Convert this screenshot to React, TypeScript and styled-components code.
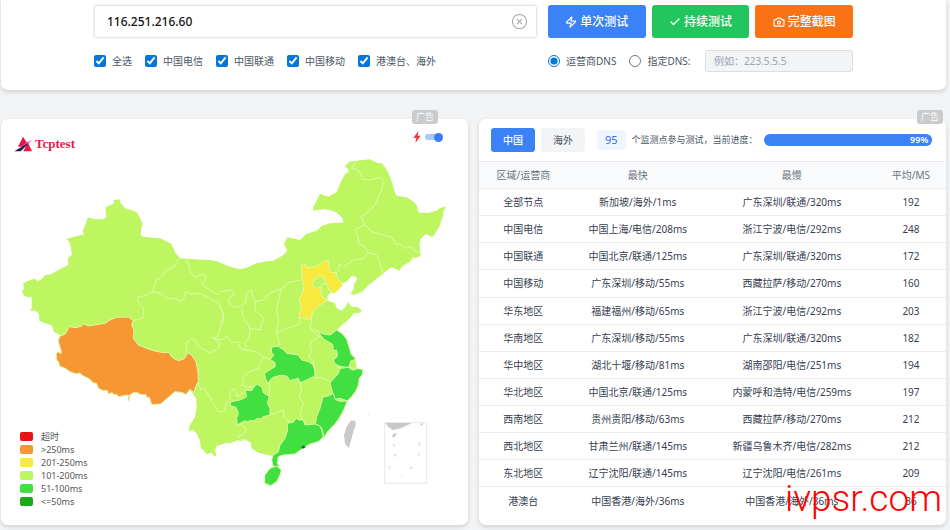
import React, { useState } from 'react';
import styled, { createGlobalStyle } from 'styled-components';
import { Camera, Check, CircleX, Zap } from 'lucide-react';

const GlobalStyle = createGlobalStyle`
  *, *::before, *::after { box-sizing: border-box; }
  body {
    margin: 0;
    background: #f2f3f5;
    color: #374151;
    font-family: "Noto Sans", "Noto Sans CJK SC", sans-serif;
    font-size: 10px;
    line-height: 14px;
  }
  button, input { font: inherit; color: inherit; margin: 0; }
`;

const Page = styled.main`
  padding: 0 4px 5px 1px;
`;

const Card = styled.section`
  position: relative;
  background: #fff;
  border-radius: 7px;
  box-shadow: 0 2px 4px rgba(0, 0, 0, 0.14);
`;

const QueryCard = styled(Card)`
  border-radius: 0 0 7px 7px;
  padding: 5px 12px 18px;
`;

const QueryForm = styled.form`
  display: grid;
  grid-template-columns: minmax(0, 1fr) 305px;
  gap: 12px 11px;
  max-width: 759px;
  margin: 0 auto;
`;

const HostField = styled.div`
  display: flex;
  align-items: center;
  height: 33px;
  padding: 0 8px 0 12px;
  border: 1px solid #e3e5e8;
  border-radius: 3px;
  box-shadow: 0 0 0 1px #f4f4f5;
`;

const HostInput = styled.input`
  flex: 1;
  min-width: 0;
  padding: 0;
  border: 0;
  outline: 0;
  background: none;
  color: #111;
  font-size: 12px;
  font-weight: 500;
`;

const ClearButton = styled.button`
  display: flex;
  padding: 0;
  border: 0;
  background: none;
  color: #a3a6ab;
`;

const ActionGroup = styled.div`
  display: grid;
  grid-template-columns: repeat(3, 1fr);
  gap: 6px;
`;

const ActionButton = styled.button<{ $tone: string }>`
  display: flex;
  align-items: center;
  justify-content: center;
  gap: 3px;
  height: 33px;
  padding: 0;
  border: 0;
  border-radius: 3px;
  background: ${(p) => p.$tone};
  color: #fff;
  font-size: 12px;
  font-weight: 500;
`;

const OptionRow = styled.div`
  display: flex;
  align-items: center;
  gap: 13px;
  height: 22px;
  white-space: nowrap;
`;

const Option = styled.label`
  display: flex;
  align-items: center;
  gap: 6px;
  color: #4b5563;
`;

const OptionInput = styled.input`
  width: 12px;
  height: 12px;
  accent-color: #0875d8;
`;

const DnsInput = styled.input`
  width: 148px;
  height: 22px;
  margin-left: auto;
  padding: 0 8px;
  border: 1px solid #dcdee2;
  border-radius: 3px;
  background: #f3f4f6;
  &::placeholder { color: #9ca3af; opacity: 1; }
`;

const Panels = styled.div`
  display: grid;
  grid-template-columns: repeat(2, minmax(0, 1fr));
  gap: 11px;
  margin-top: 29px;
`;

const AdBadge = styled.span<{ $right: number }>`
  position: absolute;
  top: -9px;
  right: ${(p) => p.$right}px;
  padding: 0 4px;
  border-radius: 3px;
  background: #cacbcd;
  color: #fff;
  font-size: 9px;
`;

const Brand = styled.a`
  position: absolute;
  top: 16px;
  left: 13px;
  display: flex;
  align-items: center;
  gap: 3px;
  color: #e5184f;
  font-family: "Liberation Serif", serif;
  font-size: 13px;
  font-weight: 700;
  line-height: 18px;
  text-decoration: none;
`;

const LiveSwitch = styled.label`
  position: absolute;
  top: 12px;
  right: 25px;
  display: flex;
  align-items: center;
  gap: 4px;
`;

const SwitchInput = styled.input`
  appearance: none;
  display: flex;
  align-items: center;
  justify-content: flex-start;
  width: 18px;
  height: 6px;
  border-radius: 3px;
  background: #d1d5db;
  &::before {
    content: "";
    width: 9px;
    height: 9px;
    flex: none;
    border-radius: 50%;
    background: #3b7cf6;
  }
  &:checked {
    justify-content: flex-end;
    background: #a9c8fc;
  }
`;

const MapSvg = styled.svg`
  display: block;
  width: 100%;
  height: auto;
`;

const Legend = styled.ul`
  position: absolute;
  left: 19px;
  bottom: 17px;
  margin: 0;
  padding: 0;
  list-style: none;
  color: #555;
  font-size: 9px;
`;

const LegendItem = styled.li<{ $color: string }>`
  display: flex;
  align-items: center;
  gap: 8px;
  height: 13px;
  line-height: 13px;
  &::before {
    content: "";
    width: 13px;
    height: 9px;
    border-radius: 2px;
    background: ${(p) => p.$color};
  }
`;

const Toolbar = styled.div`
  display: flex;
  align-items: center;
  gap: 6px;
  height: 42px;
  padding: 0 12px;
  white-space: nowrap;
`;

const TabButton = styled.button<{ $active: boolean }>`
  width: 44px;
  height: 24px;
  padding: 0;
  border: 0;
  border-radius: 3px;
  background: ${(p) => (p.$active ? '#3b82f6' : '#f3f4f6')};
  color: ${(p) => (p.$active ? '#fff' : '#4b5563')};
  font-weight: ${(p) => (p.$active ? 500 : 400)};
`;

const NodeCount = styled.strong`
  margin-left: 6px;
  padding: 3px 8px;
  border-radius: 3px;
  background: #eff6ff;
  color: #3566e8;
  font-size: 11px;
  font-weight: 400;
`;

const ProgressText = styled.span`
  color: #4b5563;
  font-size: 9px;
`;

const ProgressTrack = styled.div`
  flex: 1;
  height: 12px;
  border-radius: 6px;
  background: #f3f4f6;
`;

const ProgressFill = styled.div`
  height: 12px;
  padding-right: 4px;
  border-radius: 6px;
  background: #3b82f6;
  color: #fff;
  font-size: 9px;
  font-weight: 600;
  line-height: 12px;
  text-align: right;
`;

const ResultTable = styled.table`
  width: 100%;
  height: 353px;
  table-layout: fixed;
  border-collapse: collapse;
  text-align: center;
  white-space: nowrap;
`;

const HeadCell = styled.th<{ $width: string }>`
  width: ${(p) => p.$width};
  height: 27px;
  padding: 0;
  border-top: 1px solid #eaecef;
  background: #f9fafb;
  color: #6b7280;
  font-weight: 400;
`;

const ResultRow = styled.tr`
  border-top: 1px solid #eaecef;
`;

const Cell = styled.td`
  height: 27px;
  padding: 0;
`;

const Watermark = styled.div`
  position: absolute;
  right: 4px;
  bottom: 5px;
  color: #f00;
  font-family: Roboto, sans-serif;
  font-size: 37px;
  font-weight: 300;
  line-height: 42px;
  pointer-events: none;
`;

const carriers = ['全选', '中国电信', '中国联通', '中国移动', '港澳台、海外'];

const legend = [
  ['超时', '#e81313'],
  ['>250ms', '#f79733'],
  ['201-250ms', '#f8e93f'],
  ['101-200ms', '#bdf661'],
  ['51-100ms', '#41df3f'],
  ['<=50ms', '#1ba81b'],
];

const columns = [
  ['区域/运营商', '19%'],
  ['最快', '30%'],
  ['最慢', '36%'],
  ['平均/MS', '15%'],
];

const results = [
  ['全部节点', '新加坡/海外/1ms', '广东深圳/联通/320ms', '192'],
  ['中国电信', '中国上海/电信/208ms', '浙江宁波/电信/292ms', '248'],
  ['中国联通', '中国北京/联通/125ms', '广东深圳/联通/320ms', '172'],
  ['中国移动', '广东深圳/移动/55ms', '西藏拉萨/移动/270ms', '160'],
  ['华东地区', '福建福州/移动/65ms', '浙江宁波/电信/292ms', '203'],
  ['华南地区', '广东深圳/移动/55ms', '广东深圳/联通/320ms', '182'],
  ['华中地区', '湖北十堰/移动/81ms', '湖南邵阳/电信/251ms', '194'],
  ['华北地区', '中国北京/联通/125ms', '内蒙呼和浩特/电信/259ms', '197'],
  ['西南地区', '贵州贵阳/移动/63ms', '西藏拉萨/移动/270ms', '212'],
  ['西北地区', '甘肃兰州/联通/145ms', '新疆乌鲁木齐/电信/282ms', '212'],
  ['东北地区', '辽宁沈阳/联通/145ms', '辽宁沈阳/电信/261ms', '209'],
  ['港澳台', '中国香港/海外/36ms', '中国香港/海外/36ms', '36'],
];

const mainland =
  '66,872 72,868 70,850 85,842 105,836 112,844 122,840 135,826 155,822 175,810 205,795 204,775 216,763 210,730 200,716 245,704 252,706 248,695 264,652 285,658 308,658 319,652 316,622 340,612 342,600 360,598 361,608 375,625 400,632 412,638 424,662 428,672 424,685 425,690 421,705 430,710 460,713 480,715 515,732 525,757 540,775 580,778 630,780 650,784 670,792 690,800 720,808 740,803 770,790 800,784 820,782 850,765 862,752 852,732 862,712 900,720 918,702 950,692 965,678 990,670 1030,668 1028,655 1010,638 990,630 975,628 950,630 938,632 940,622 960,582 985,590 1010,576 1015,565 1018,555 1035,522 1046,515 1042,505 1034,498 1048,485 1070,482 1110,478 1130,488 1145,490 1158,505 1170,530 1180,560 1186,582 1192,588 1220,592 1240,605 1250,615 1253,630 1258,638 1285,638 1310,632 1320,624 1338,619 1330,636 1328,650 1318,680 1298,712 1278,702 1262,716 1258,735 1262,768 1245,775 1240,770 1230,785 1205,800 1198,812 1175,802 1160,812 1148,822 1125,840 1100,860 1090,872 1078,878 1060,886 1052,880 1062,866 1062,852 1072,838 1068,830 1055,828 1040,845 1022,852 1028,856 1012,874 1002,880 990,878 982,890 984,902 1005,910 1010,925 1025,932 1035,922 1046,905 1050,917 1060,921 1070,920 1085,930 1080,938 1062,939 1055,948 1045,960 1025,975 1010,992 1028,1002 1040,1018 1050,1050 1053,1062 1068,1078 1070,1106 1088,1108 1088,1122 1078,1135 1075,1155 1068,1172 1055,1190 1042,1203 1032,1228 1020,1250 1005,1272 985,1292 972,1312 955,1325 930,1332 908,1345 885,1362 850,1365 835,1370 832,1390 838,1400 820,1400 815,1380 818,1368 790,1362 775,1358 755,1345 752,1328 738,1320 730,1318 720,1325 715,1320 690,1330 680,1328 660,1335 650,1337 645,1350 650,1370 640,1366 635,1358 620,1363 610,1350 602,1345 600,1322 590,1300 578,1290 565,1294 570,1275 585,1250 590,1220 588,1195 578,1180 520,1120 180,1005 162,995 155,976 135,970 118,962 116,940 105,932 88,932 95,925 95,892 80,890 72,888';

const tibet =
  '175,1020 180,1008 195,1003 208,980 230,983 244,978 252,971 265,978 300,972 315,970 330,960 350,952 385,951 400,962 395,975 402,990 400,1015 415,1035 440,1045 460,1052 490,1058 505,1057 520,1075 535,1082 550,1078 556,1072 562,1058 575,1065 588,1085 594,1115 595,1145 585,1165 583,1178 570,1168 558,1184 548,1178 525,1175 510,1188 490,1205 482,1212 455,1214 448,1192 440,1193 438,1184 420,1184 415,1179 400,1178 390,1185 388,1202 384,1200 385,1185 355,1190 350,1183 340,1184 337,1178 325,1182 322,1172 310,1172 295,1165 289,1150 278,1148 270,1138 245,1125 240,1119 228,1122 210,1115 195,1105 178,1098 176,1086 170,1080 168,1062 175,1055 182,1062 184,1055 178,1035';

const hebei =
  '905,795 915,793 922,803 945,800 965,790 972,784 985,781 988,795 988,808 995,818 1010,816 1008,830 1022,845 1028,856 1015,870 1002,880 988,872 982,855 976,848 972,835 960,827 950,835 943,836 936,855 950,865 962,862 966,890 985,900 970,908 950,923 940,935 935,945 935,957 915,957 898,952 898,940 905,920 897,900 908,880 912,860 908,845 905,820';

const lowLatency = [
  '815,1042 835,1038 842,1045 850,1048 860,1060 895,1065 905,1080 925,1085 940,1095 945,1115 945,1128 920,1140 900,1148 895,1135 870,1142 860,1128 840,1126 820,1132 812,1138 805,1150 797,1138 793,1120 825,1100 825,1088 810,1078 822,1065 815,1058',
  '693,1205 720,1200 740,1190 735,1170 755,1172 762,1160 772,1153 785,1160 790,1178 808,1190 802,1210 810,1225 810,1245 790,1250 782,1257 770,1255 764,1262 750,1262 740,1266 735,1262 712,1275 710,1255 715,1240 708,1222 693,1218',
  '955,995 970,1002 990,1005 1010,990 1028,1002 1040,1018 1050,1050 1053,1062 1068,1078 1055,1085 1045,1102 1022,1100 1005,1092 1000,1080 1012,1070 1010,1050 1000,1052 998,1033 972,1018 960,1003',
  '1020,1105 1045,1102 1058,1110 1070,1106 1088,1108 1088,1122 1078,1135 1075,1155 1068,1172 1055,1190 1042,1203 1020,1195 1005,1198 998,1180 990,1148 1005,1132 1015,1120',
  '970,1190 985,1188 1000,1180 1005,1198 1020,1204 1042,1203 1032,1228 1020,1250 1005,1272 985,1292 972,1312 965,1285 946,1272 950,1250 960,1225',
  '888,1255 900,1260 910,1260 915,1275 945,1272 960,1278 965,1290 970,1310 955,1325 930,1332 908,1345 885,1362 850,1365 835,1370 832,1390 838,1400 820,1400 815,1380 820,1365 835,1355 840,1335 855,1315 863,1290 862,1270 880,1266',
  '795,1425 810,1405 830,1398 844,1410 840,1425 830,1445 812,1457 795,1450',
];

const borders = [
  '540,775 530,785 525,800 500,810 485,830 468,842 458,875 440,885 412,892 418,915 432,925 428,955 400,962',
  '458,875 480,880 495,893 525,897 545,903 555,888 555,875 575,882 600,880 630,895 655,910 668,935 672,960 660,985 655,1005 650,1012 635,1012',
  '560,778 568,800 570,815 585,832 600,825 615,823 618,835 605,852 625,868 640,875 650,885 660,875 695,870 702,878 700,885 685,895 688,910 700,920 715,922 735,910 740,880 755,870 757,885 765,905 790,900 808,880 845,865 865,848 900,840',
  '725,925 730,955 745,975 750,985 780,990 785,970 793,955 775,940 765,930 765,905',
  '660,925 670,940 662,975',
  '845,865 838,890 830,930 835,960 830,1000 838,1030 832,1040',
  '750,985 748,1010 735,1030 738,1050 770,1055 790,1070 810,1078',
  '562,1058 558,1030 575,1015 585,1020 595,1040 630,1058 655,1045 660,1030 640,1015 665,1020 680,1008 695,1028 712,1025 725,1048 738,1050',
  '790,1070 775,1105 750,1115 730,1130 728,1155 745,1162 762,1160',
  '830,1000 860,985 880,978 900,972 898,952',
  '935,957 930,985 945,1000 957,1010 935,1025 930,1040 935,1055 925,1070 940,1080 945,1115',
  '935,985 955,995',
  '960,1012 955,1005',
  '945,1135 965,1132 990,1145',
  '1020,1105 1005,1092',
  '900,1148 905,1170 898,1190 910,1210 900,1240 905,1257',
  '808,1145 808,1190',
  '810,1245 850,1230 853,1255 870,1265',
  '710,1275 725,1275 738,1285 733,1302 715,1310 725,1320 740,1320',
  '595,1150 602,1170 610,1162 625,1185 640,1210 655,1235 670,1235 675,1228 680,1208 690,1198 690,1180 700,1166 708,1174 712,1190 730,1178 740,1180',
  '1065,488 1055,505 1075,510 1090,538 1110,540 1140,532 1152,545 1145,570 1125,615 1100,640 1082,650 1095,675 1065,688 1075,710 1075,730 1095,740 1105,758 1090,775 1060,780 1030,802 1018,790 1015,815',
  '1095,675 1115,695 1150,705 1175,712 1190,735 1200,732 1215,745 1235,740 1242,752 1262,758',
  '1105,758 1130,765 1140,790 1150,825',
  '962,862 968,850 978,852',
];

const insetMarks = [
  '1177,1305 1185,1300 1190,1298 1185,1310 1178,1313',
  '1260,1272 1268,1270 1267,1278',
  '1256,1332 1259,1325 1260,1336',
  '1253,1368 1258,1357 1257,1366',
  '1228,1408 1238,1398 1236,1405',
  '1180,1369 1188,1361 1187,1368',
  '1166,1396 1170,1405 1168,1407',
  '1203,1426 1207,1425 1205,1428',
  '1178,1328 1185,1338 1182,1339',
  '1105,1243 1108,1242 1108,1246',
];

function BrandMark() {
  return (
    <svg width="18" height="16" viewBox="0 0 54 48" aria-hidden="true">
      <path d="M27 2 41 23 25 32H12Z" fill="#ed1745" />
      <path d="M36 29 42 20 54 46H28Z" fill="#ed1745" />
      <path d="M54 13 C38 18 28 25 19 35 C35 25 43 25 54 13Z" fill="#d94b91" />
      <path d="M1 46 C15 38 26 30 38 24 L44 21 C35 31 27 39 20 46Z" fill="#28194d" />
    </svg>
  );
}

function ChinaMap() {
  return (
    <MapSvg viewBox="3 357 1401 1218" role="img" aria-label="中国延迟分布图">
      <g stroke="#dffaa9" strokeWidth="3" strokeLinejoin="round" strokeLinecap="round">
        <polygon points={mainland} fill="#bdf661" stroke="none" />
        {borders.map((line) => (
          <polyline key={line} points={line} fill="none" />
        ))}
        <polygon points={tibet} fill="#f79733" />
        <polygon points={hebei} fill="#f8e93f" />
        {lowLatency.map((area) => (
          <polygon key={area} points={area} fill="#41df3f" />
        ))}
        <polygon points="1053,1083 1066,1078 1070,1106 1058,1108 1050,1098" fill="#bdf661" />
      </g>
      <polygon points="903,1342 911,1336 917,1342 908,1346" fill="#176e24" />
      <polygon
        points="1032,1305 1040,1280 1052,1262 1065,1262 1068,1272 1060,1295 1052,1325 1046,1345 1035,1330"
        fill="#c9c9c9"
      />
      <rect x="1154" y="1268" width="126" height="182" fill="none" stroke="#e8e8e8" strokeWidth="3" />
      <polygon points="1156,1269 1235,1269 1205,1284 1178,1290 1165,1281" fill="#c9c9c9" />
      {insetMarks.map((mark) => (
        <polygon key={mark} points={mark} fill="#c9c9c9" stroke="#dedede" strokeWidth="1" />
      ))}
    </MapSvg>
  );
}

export default function App() {
  const [host, setHost] = useState('116.251.216.60');
  const [selected, setSelected] = useState(carriers);
  const [dns, setDns] = useState('isp');
  const [region, setRegion] = useState('中国');
  const progress = 99;

  const toggleCarrier = (name: string) =>
    setSelected((list) => (list.includes(name) ? list.filter((n) => n !== name) : [...list, name]));

  return (
    <Page>
      <GlobalStyle />
      <QueryCard>
        <QueryForm onSubmit={(e) => e.preventDefault()}>
          <HostField>
            <HostInput aria-label="IP" value={host} onChange={(e) => setHost(e.target.value)} />
            <ClearButton type="button" aria-label="清空" onClick={() => setHost('')}>
              <CircleX size={17} strokeWidth={1.5} />
            </ClearButton>
          </HostField>
          <ActionGroup>
            <ActionButton $tone="#3b82f6"><Zap size={12} strokeWidth={2.5} />单次测试</ActionButton>
            <ActionButton $tone="#22c55e" type="button"><Check size={12} strokeWidth={2.5} />持续测试</ActionButton>
            <ActionButton $tone="#f97316" type="button"><Camera size={12} strokeWidth={2.5} />完整截图</ActionButton>
          </ActionGroup>
          <OptionRow>
            {carriers.map((name) => (
              <Option key={name}>
                <OptionInput type="checkbox" checked={selected.includes(name)} onChange={() => toggleCarrier(name)} />
                {name}
              </Option>
            ))}
          </OptionRow>
          <OptionRow>
            <Option>
              <OptionInput type="radio" name="dns" checked={dns === 'isp'} onChange={() => setDns('isp')} />
              运营商DNS
            </Option>
            <Option>
              <OptionInput type="radio" name="dns" checked={dns === 'custom'} onChange={() => setDns('custom')} />
              指定DNS:
            </Option>
            <DnsInput aria-label="DNS" placeholder="例如：223.5.5.5" disabled={dns === 'isp'} />
          </OptionRow>
        </QueryForm>
      </QueryCard>

      <Panels>
        <Card>
          <ChinaMap />
          <AdBadge $right={30}>广告</AdBadge>
          <Brand href="#"><BrandMark />Tcptest</Brand>
          <LiveSwitch>
            <svg width="8" height="12" viewBox="0 0 24 36" aria-hidden="true">
              <path d="M16 0 1 21H10L7 36 23 14H14Z" fill="#f3333d" />
            </svg>
            <SwitchInput type="checkbox" role="switch" aria-label="实时" defaultChecked />
          </LiveSwitch>
          <Legend>
            {legend.map(([label, color]) => (
              <LegendItem key={label} $color={color}>{label}</LegendItem>
            ))}
          </Legend>
        </Card>

        <Card>
          <AdBadge $right={3}>广告</AdBadge>
          <Toolbar>
            {['中国', '海外'].map((name) => (
              <TabButton key={name} type="button" $active={region === name} onClick={() => setRegion(name)}>
                {name}
              </TabButton>
            ))}
            <NodeCount>95</NodeCount>
            <ProgressText>个监测点参与测试，当前进度：</ProgressText>
            <ProgressTrack role="progressbar" aria-valuenow={progress} aria-valuemin={0} aria-valuemax={100}>
              <ProgressFill style={{ width: `${progress}%` }}>{progress}%</ProgressFill>
            </ProgressTrack>
          </Toolbar>
          <ResultTable>
            <thead>
              <tr>
                {columns.map(([label, width]) => (
                  <HeadCell key={label} scope="col" $width={width}>{label}</HeadCell>
                ))}
              </tr>
            </thead>
            <tbody>
              {results.map((row) => (
                <ResultRow key={row[0]}>
                  {row.map((value, i) => (
                    <Cell key={i}>{value}</Cell>
                  ))}
                </ResultRow>
              ))}
            </tbody>
          </ResultTable>
          <Watermark>ivpsr.com</Watermark>
        </Card>
      </Panels>
    </Page>
  );
}
